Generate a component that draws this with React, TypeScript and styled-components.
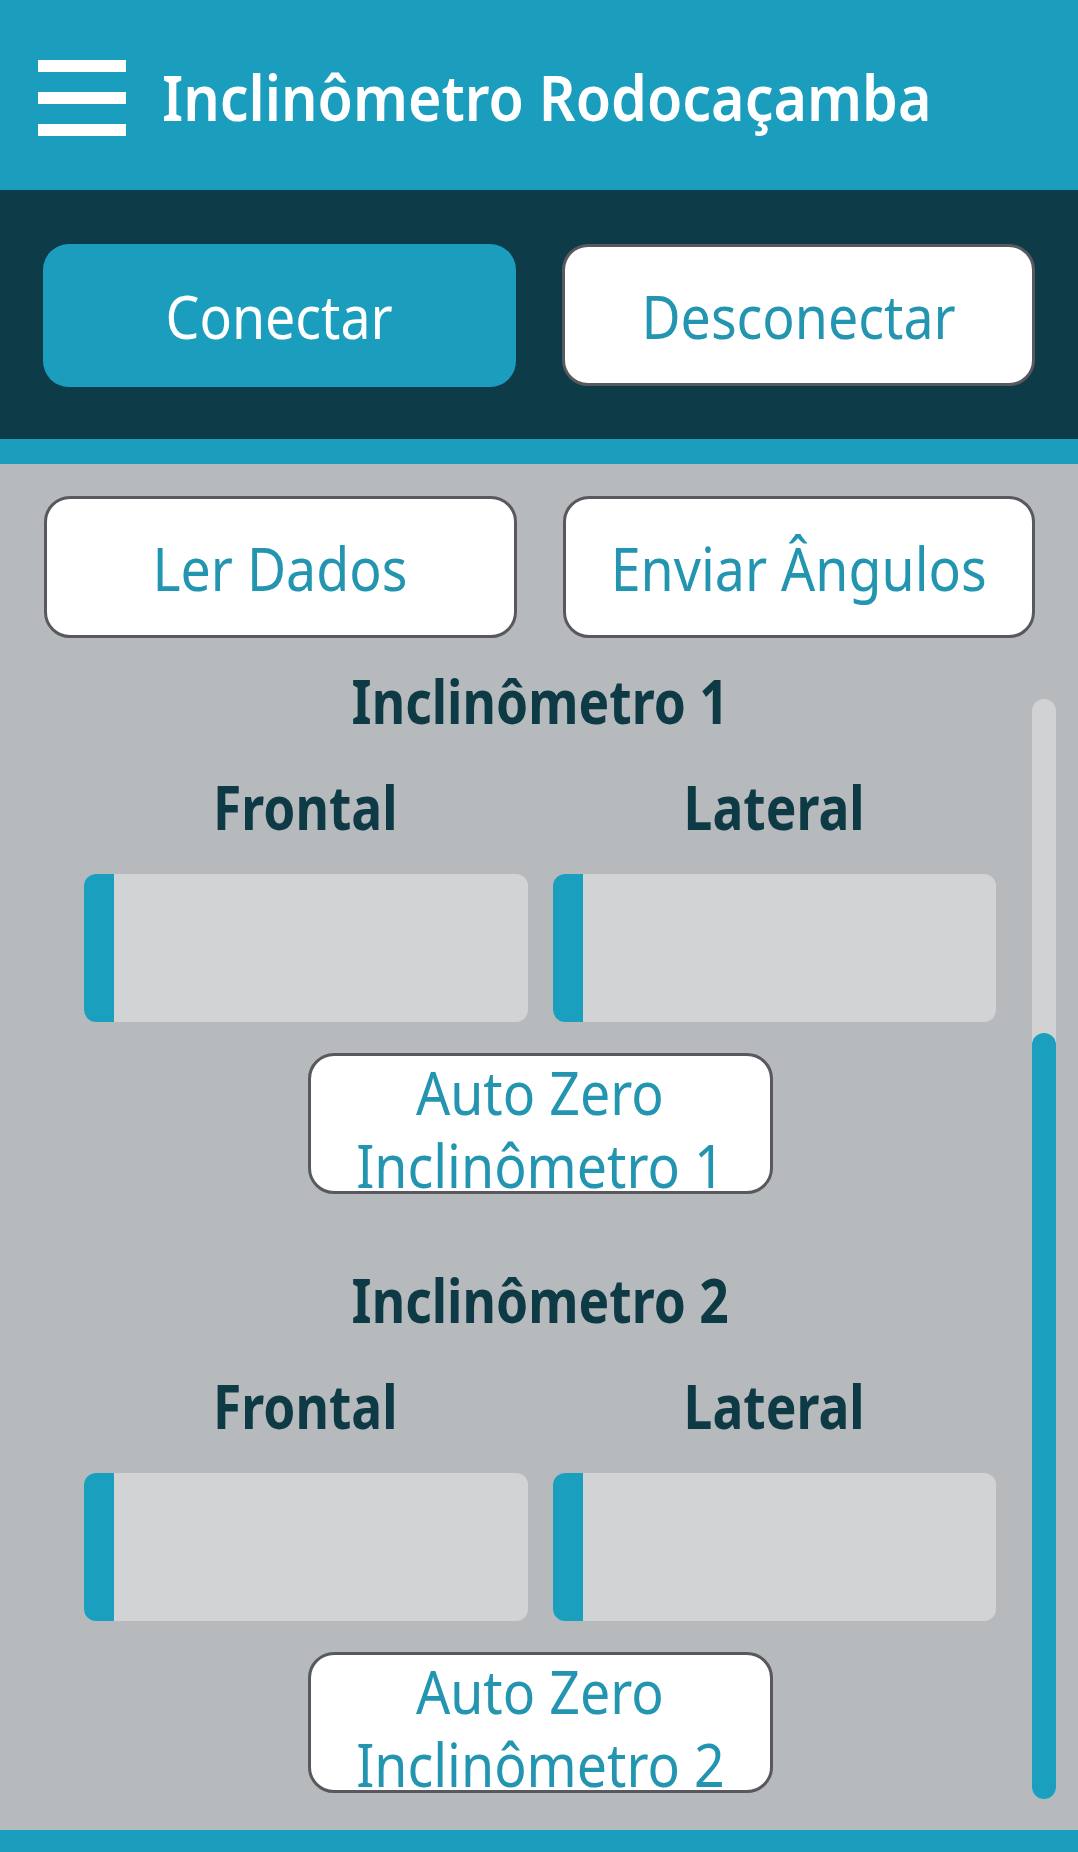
import React from "react";
import styled, { createGlobalStyle } from "styled-components";

const Global = createGlobalStyle`
  html, body { margin: 0; padding: 0; }
  body {
    background: #b7babc;
    font-family: "Noto Sans", "Open Sans", sans-serif;
  }
  * { box-sizing: border-box; }
`;

const Page = styled.div`
  width: 1078px;
  height: 1852px;
  display: flex;
  flex-direction: column;
  background: #b7babc;
  overflow: hidden;
`;

/* the reference face is a narrow cut of the Noto/Open Sans design */
const Narrow = styled.span<{ $x: number; $origin?: string }>`
  display: inline-block;
  white-space: nowrap;
  transform: scaleX(${(p) => p.$x});
  transform-origin: ${(p) => p.$origin ?? "center"};
`;

const Header = styled.header`
  height: 190px;
  flex: none;
  background: #1b9ebd;
  display: flex;
  align-items: center;
  padding: 4px 0 0 38px;
  gap: 36px;
`;

const Burger = styled.div`
  width: 88px;
  flex: none;
  display: flex;
  flex-direction: column;
  gap: 20px;
  margin-top: 2px;
`;

const BurgerBar = styled.span`
  display: block;
  height: 12px;
  background: #ffffff;
`;

const Title = styled.h1`
  margin: 0;
  color: #ffffff;
  font-size: 63px;
  font-weight: 600;
  line-height: 1.2;
  white-space: nowrap;
`;

const ConnBand = styled.section`
  flex: none;
  height: 249px;
  background: #0d3b47;
  padding: 54px 43px 0 43px;
  display: grid;
  grid-template-columns: 1fr 1fr;
  column-gap: 46px;
  align-items: start;
`;

const Strip = styled.div`
  flex: none;
  height: 25px;
  background: #1b9ebd;
`;

const Button = styled.button<{ $filled?: boolean; $h?: number }>`
  height: ${(p) => p.$h ?? 142}px;
  border-radius: 26px;
  border: ${(p) => (p.$filled ? "none" : "3px solid #58585e")};
  background: ${(p) => (p.$filled ? "#1b9ebd" : "#ffffff")};
  color: ${(p) => (p.$filled ? "#ffffff" : "#2395b0")};
  font-family: inherit;
  font-size: 61px;
  font-weight: 400;
  line-height: 73px;
  display: flex;
  align-items: center;
  justify-content: center;
  text-align: center;
  padding: 0;
  overflow: hidden;
`;

const Body = styled.main`
  flex: 1;
  position: relative;
  display: flex;
  flex-direction: column;
`;

const ActionRow = styled.div`
  padding: 32px 43px 0 44px;
  display: grid;
  grid-template-columns: 1fr 1fr;
  column-gap: 46px;
`;

const Scroll = styled.div`
  flex: 1;
  display: flex;
  flex-direction: column;
  padding: 26px 82px 0 84px;
`;

const Section = styled.section<{ $last?: boolean }>`
  display: flex;
  flex-direction: column;
  align-items: center;
  margin-bottom: ${(p) => (p.$last ? 0 : 69)}px;
`;

const Heading = styled.h2`
  margin: 0;
  color: #0e3a46;
  font-size: 61px;
  font-weight: 700;
  line-height: 73px;
`;

const Columns = styled.div`
  align-self: stretch;
  display: grid;
  grid-template-columns: 1fr 1fr;
  column-gap: 25px;
  margin-top: 33px;
`;

const Column = styled.div`
  display: flex;
  flex-direction: column;
  align-items: center;
  gap: 31px;
`;

const Label = styled.div`
  color: #0e3a46;
  font-size: 61px;
  font-weight: 700;
  line-height: 73px;
`;

const Bar = styled.div`
  align-self: stretch;
  height: 148px;
  border-radius: 12px;
  background: #d2d3d5;
  overflow: hidden;
  display: flex;
`;

const BarFill = styled.div`
  height: 100%;
  background: #1a9fbe;
`;

const ZeroButton = styled(Button)`
  width: 465px;
  margin-top: 31px;
  padding-top: 8px;
  flex-direction: column;
`;

const Track = styled.div`
  position: absolute;
  right: 22px;
  top: 235px;
  width: 24px;
  height: 1100px;
  border-radius: 12px;
  background: #d0d2d3;
`;

const Thumb = styled.div`
  position: absolute;
  left: 0;
  right: 0;
  bottom: 0;
  height: 766px;
  border-radius: 12px;
  background: #1a9fbe;
`;

const BottomStrip = styled.div`
  flex: none;
  height: 22px;
  background: #1b9ebd;
`;

const sensors = [1, 2];
const BTN = 0.88;
const HEAD = 0.845;

export default function App() {
  return (
    <>
      <Global />
      <Page>
        <Header>
          <Burger aria-label="menu">
            <BurgerBar />
            <BurgerBar />
            <BurgerBar />
          </Burger>
          <Title>
            <Narrow $x={0.91} $origin="left">Inclinômetro Rodocaçamba</Narrow>
          </Title>
        </Header>
        <ConnBand>
          <Button $filled $h={143}>
            <Narrow $x={BTN}>Conectar</Narrow>
          </Button>
          <Button $h={142}>
            <Narrow $x={BTN}>Desconectar</Narrow>
          </Button>
        </ConnBand>
        <Strip />
        <Body>
          <ActionRow>
            <Button>
              <Narrow $x={BTN}>Ler Dados</Narrow>
            </Button>
            <Button>
              <Narrow $x={BTN}>Enviar Ângulos</Narrow>
            </Button>
          </ActionRow>
          <Scroll>
            {sensors.map((n, i) => (
              <Section key={n} $last={i === sensors.length - 1}>
                <Heading>
                  <Narrow $x={HEAD}>Inclinômetro {n}</Narrow>
                </Heading>
                <Columns>
                  {["Frontal", "Lateral"].map((l) => (
                    <Column key={l}>
                      <Label>
                        <Narrow $x={HEAD}>{l}</Narrow>
                      </Label>
                      <Bar>
                        <BarFill style={{ width: 30 }} />
                      </Bar>
                    </Column>
                  ))}
                </Columns>
                <ZeroButton $h={141}>
                  <Narrow $x={BTN}>Auto Zero</Narrow>
                  <Narrow $x={BTN}>Inclinômetro {n}</Narrow>
                </ZeroButton>
              </Section>
            ))}
          </Scroll>
          <Track>
            <Thumb />
          </Track>
        </Body>
        <BottomStrip />
      </Page>
    </>
  );
}
